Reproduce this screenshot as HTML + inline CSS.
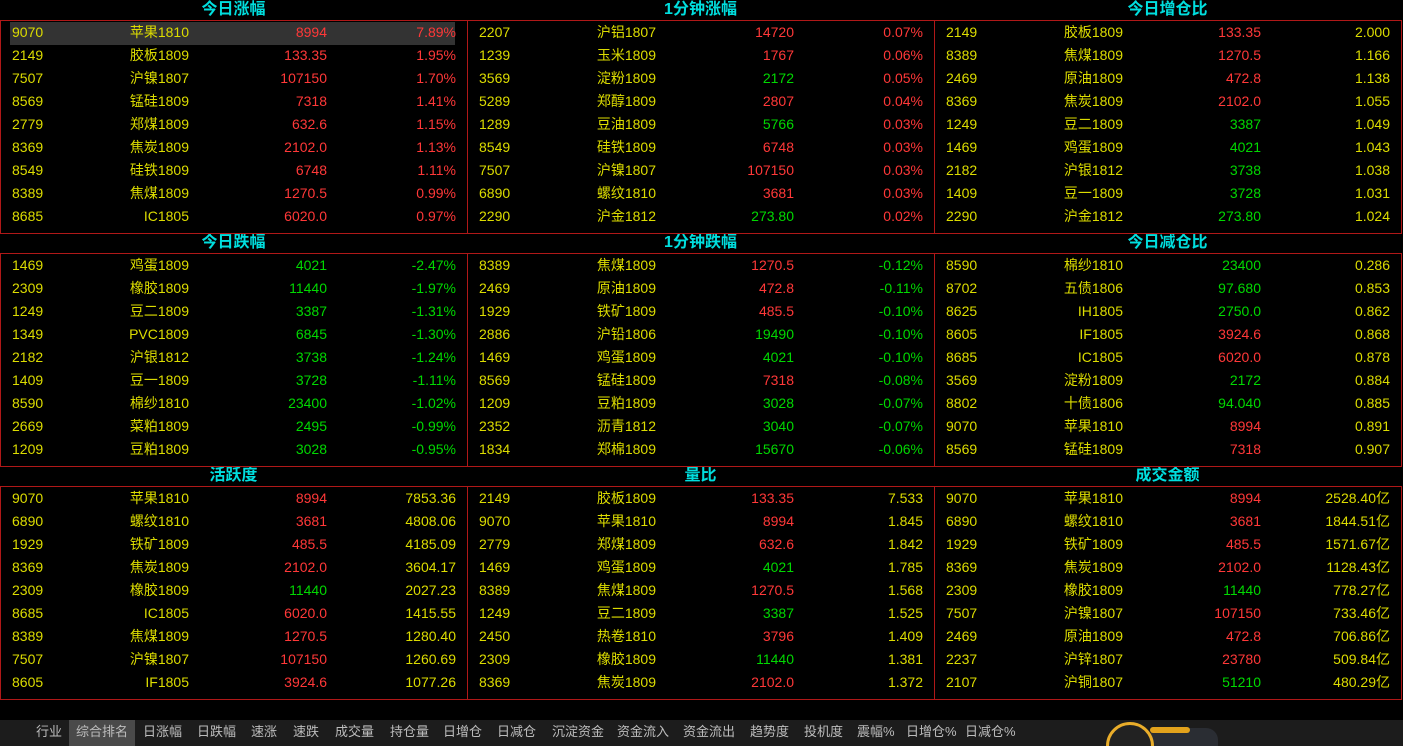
<!DOCTYPE html>
<html><head><meta charset="utf-8"><style>
html,body{margin:0;padding:0;background:#000;width:1403px;height:746px;overflow:hidden;position:relative;font-family:"Liberation Sans","Noto Sans CJK SC",sans-serif;}
.t{position:absolute;height:20px;line-height:20px;width:467px;text-align:center;color:#00dede;font-size:16px;font-weight:bold;}
.box{position:absolute;left:0;width:1400px;height:212px;border:1px solid #b01818;}
.v{position:absolute;top:0;bottom:0;width:1px;background:#b01818;}
.p{position:absolute;width:467px;}
.r{position:relative;height:23px;line-height:23px;font-size:14px;}
.r span{position:absolute;white-space:nowrap;}
.c{left:12px;color:#dcdc00;}
.n{right:278px;color:#dcdc00;}
.x{right:140px;}
.q{right:11px;}
.R{color:#ff3838}.G{color:#00d800}.Y{color:#dcdc00}
.hl{background:#333;}
.tb{position:absolute;left:0;top:720px;width:1403px;height:26px;background:#1c1c1c;}
.tb span{position:absolute;top:0;height:26px;line-height:24px;font-size:13px;color:#bdbdbd;}
</style></head><body>
<div class="t" style="left:0;top:0">今日涨幅</div>
<div class="t" style="left:467px;top:0">1分钟涨幅</div>
<div class="t" style="left:934px;top:0">今日增仓比</div>
<div class="t" style="left:0;top:233px">今日跌幅</div>
<div class="t" style="left:467px;top:233px">1分钟跌幅</div>
<div class="t" style="left:934px;top:233px">今日减仓比</div>
<div class="t" style="left:0;top:466px">活跃度</div>
<div class="t" style="left:467px;top:466px">量比</div>
<div class="t" style="left:934px;top:466px">成交金额</div>

<div class="box" style="top:20px"><div class="v" style="left:466px"></div><div class="v" style="left:933px"></div></div>
<div class="box" style="top:253px"><div class="v" style="left:466px"></div><div class="v" style="left:933px"></div></div>
<div class="box" style="top:486px"><div class="v" style="left:466px"></div><div class="v" style="left:933px"></div></div>

<div class="p" style="left:0;top:21px">
<div class="r"><div class="hl" style="position:absolute;left:10px;right:12px;top:1px;height:23px"></div><span class="c">9070</span><span class="n">苹果1810</span><span class="x R">8994</span><span class="q R">7.89%</span></div>
<div class="r"><span class="c">2149</span><span class="n">胶板1809</span><span class="x R">133.35</span><span class="q R">1.95%</span></div>
<div class="r"><span class="c">7507</span><span class="n">沪镍1807</span><span class="x R">107150</span><span class="q R">1.70%</span></div>
<div class="r"><span class="c">8569</span><span class="n">锰硅1809</span><span class="x R">7318</span><span class="q R">1.41%</span></div>
<div class="r"><span class="c">2779</span><span class="n">郑煤1809</span><span class="x R">632.6</span><span class="q R">1.15%</span></div>
<div class="r"><span class="c">8369</span><span class="n">焦炭1809</span><span class="x R">2102.0</span><span class="q R">1.13%</span></div>
<div class="r"><span class="c">8549</span><span class="n">硅铁1809</span><span class="x R">6748</span><span class="q R">1.11%</span></div>
<div class="r"><span class="c">8389</span><span class="n">焦煤1809</span><span class="x R">1270.5</span><span class="q R">0.99%</span></div>
<div class="r"><span class="c">8685</span><span class="n">IC1805</span><span class="x R">6020.0</span><span class="q R">0.97%</span></div>
</div>
<div class="p" style="left:467px;top:21px">
<div class="r"><span class="c">2207</span><span class="n">沪铝1807</span><span class="x R">14720</span><span class="q R">0.07%</span></div>
<div class="r"><span class="c">1239</span><span class="n">玉米1809</span><span class="x R">1767</span><span class="q R">0.06%</span></div>
<div class="r"><span class="c">3569</span><span class="n">淀粉1809</span><span class="x G">2172</span><span class="q R">0.05%</span></div>
<div class="r"><span class="c">5289</span><span class="n">郑醇1809</span><span class="x R">2807</span><span class="q R">0.04%</span></div>
<div class="r"><span class="c">1289</span><span class="n">豆油1809</span><span class="x G">5766</span><span class="q R">0.03%</span></div>
<div class="r"><span class="c">8549</span><span class="n">硅铁1809</span><span class="x R">6748</span><span class="q R">0.03%</span></div>
<div class="r"><span class="c">7507</span><span class="n">沪镍1807</span><span class="x R">107150</span><span class="q R">0.03%</span></div>
<div class="r"><span class="c">6890</span><span class="n">螺纹1810</span><span class="x R">3681</span><span class="q R">0.03%</span></div>
<div class="r"><span class="c">2290</span><span class="n">沪金1812</span><span class="x G">273.80</span><span class="q R">0.02%</span></div>
</div>
<div class="p" style="left:934px;top:21px">
<div class="r"><span class="c">2149</span><span class="n">胶板1809</span><span class="x R">133.35</span><span class="q Y">2.000</span></div>
<div class="r"><span class="c">8389</span><span class="n">焦煤1809</span><span class="x R">1270.5</span><span class="q Y">1.166</span></div>
<div class="r"><span class="c">2469</span><span class="n">原油1809</span><span class="x R">472.8</span><span class="q Y">1.138</span></div>
<div class="r"><span class="c">8369</span><span class="n">焦炭1809</span><span class="x R">2102.0</span><span class="q Y">1.055</span></div>
<div class="r"><span class="c">1249</span><span class="n">豆二1809</span><span class="x G">3387</span><span class="q Y">1.049</span></div>
<div class="r"><span class="c">1469</span><span class="n">鸡蛋1809</span><span class="x G">4021</span><span class="q Y">1.043</span></div>
<div class="r"><span class="c">2182</span><span class="n">沪银1812</span><span class="x G">3738</span><span class="q Y">1.038</span></div>
<div class="r"><span class="c">1409</span><span class="n">豆一1809</span><span class="x G">3728</span><span class="q Y">1.031</span></div>
<div class="r"><span class="c">2290</span><span class="n">沪金1812</span><span class="x G">273.80</span><span class="q Y">1.024</span></div>
</div>

<div class="p" style="left:0;top:254px">
<div class="r"><span class="c">1469</span><span class="n">鸡蛋1809</span><span class="x G">4021</span><span class="q G">-2.47%</span></div>
<div class="r"><span class="c">2309</span><span class="n">橡胶1809</span><span class="x G">11440</span><span class="q G">-1.97%</span></div>
<div class="r"><span class="c">1249</span><span class="n">豆二1809</span><span class="x G">3387</span><span class="q G">-1.31%</span></div>
<div class="r"><span class="c">1349</span><span class="n">PVC1809</span><span class="x G">6845</span><span class="q G">-1.30%</span></div>
<div class="r"><span class="c">2182</span><span class="n">沪银1812</span><span class="x G">3738</span><span class="q G">-1.24%</span></div>
<div class="r"><span class="c">1409</span><span class="n">豆一1809</span><span class="x G">3728</span><span class="q G">-1.11%</span></div>
<div class="r"><span class="c">8590</span><span class="n">棉纱1810</span><span class="x G">23400</span><span class="q G">-1.02%</span></div>
<div class="r"><span class="c">2669</span><span class="n">菜粕1809</span><span class="x G">2495</span><span class="q G">-0.99%</span></div>
<div class="r"><span class="c">1209</span><span class="n">豆粕1809</span><span class="x G">3028</span><span class="q G">-0.95%</span></div>
</div>
<div class="p" style="left:467px;top:254px">
<div class="r"><span class="c">8389</span><span class="n">焦煤1809</span><span class="x R">1270.5</span><span class="q G">-0.12%</span></div>
<div class="r"><span class="c">2469</span><span class="n">原油1809</span><span class="x R">472.8</span><span class="q G">-0.11%</span></div>
<div class="r"><span class="c">1929</span><span class="n">铁矿1809</span><span class="x R">485.5</span><span class="q G">-0.10%</span></div>
<div class="r"><span class="c">2886</span><span class="n">沪铅1806</span><span class="x G">19490</span><span class="q G">-0.10%</span></div>
<div class="r"><span class="c">1469</span><span class="n">鸡蛋1809</span><span class="x G">4021</span><span class="q G">-0.10%</span></div>
<div class="r"><span class="c">8569</span><span class="n">锰硅1809</span><span class="x R">7318</span><span class="q G">-0.08%</span></div>
<div class="r"><span class="c">1209</span><span class="n">豆粕1809</span><span class="x G">3028</span><span class="q G">-0.07%</span></div>
<div class="r"><span class="c">2352</span><span class="n">沥青1812</span><span class="x G">3040</span><span class="q G">-0.07%</span></div>
<div class="r"><span class="c">1834</span><span class="n">郑棉1809</span><span class="x G">15670</span><span class="q G">-0.06%</span></div>
</div>
<div class="p" style="left:934px;top:254px">
<div class="r"><span class="c">8590</span><span class="n">棉纱1810</span><span class="x G">23400</span><span class="q Y">0.286</span></div>
<div class="r"><span class="c">8702</span><span class="n">五债1806</span><span class="x G">97.680</span><span class="q Y">0.853</span></div>
<div class="r"><span class="c">8625</span><span class="n">IH1805</span><span class="x G">2750.0</span><span class="q Y">0.862</span></div>
<div class="r"><span class="c">8605</span><span class="n">IF1805</span><span class="x R">3924.6</span><span class="q Y">0.868</span></div>
<div class="r"><span class="c">8685</span><span class="n">IC1805</span><span class="x R">6020.0</span><span class="q Y">0.878</span></div>
<div class="r"><span class="c">3569</span><span class="n">淀粉1809</span><span class="x G">2172</span><span class="q Y">0.884</span></div>
<div class="r"><span class="c">8802</span><span class="n">十债1806</span><span class="x G">94.040</span><span class="q Y">0.885</span></div>
<div class="r"><span class="c">9070</span><span class="n">苹果1810</span><span class="x R">8994</span><span class="q Y">0.891</span></div>
<div class="r"><span class="c">8569</span><span class="n">锰硅1809</span><span class="x R">7318</span><span class="q Y">0.907</span></div>
</div>

<div class="p" style="left:0;top:487px">
<div class="r"><span class="c">9070</span><span class="n">苹果1810</span><span class="x R">8994</span><span class="q Y">7853.36</span></div>
<div class="r"><span class="c">6890</span><span class="n">螺纹1810</span><span class="x R">3681</span><span class="q Y">4808.06</span></div>
<div class="r"><span class="c">1929</span><span class="n">铁矿1809</span><span class="x R">485.5</span><span class="q Y">4185.09</span></div>
<div class="r"><span class="c">8369</span><span class="n">焦炭1809</span><span class="x R">2102.0</span><span class="q Y">3604.17</span></div>
<div class="r"><span class="c">2309</span><span class="n">橡胶1809</span><span class="x G">11440</span><span class="q Y">2027.23</span></div>
<div class="r"><span class="c">8685</span><span class="n">IC1805</span><span class="x R">6020.0</span><span class="q Y">1415.55</span></div>
<div class="r"><span class="c">8389</span><span class="n">焦煤1809</span><span class="x R">1270.5</span><span class="q Y">1280.40</span></div>
<div class="r"><span class="c">7507</span><span class="n">沪镍1807</span><span class="x R">107150</span><span class="q Y">1260.69</span></div>
<div class="r"><span class="c">8605</span><span class="n">IF1805</span><span class="x R">3924.6</span><span class="q Y">1077.26</span></div>
</div>
<div class="p" style="left:467px;top:487px">
<div class="r"><span class="c">2149</span><span class="n">胶板1809</span><span class="x R">133.35</span><span class="q Y">7.533</span></div>
<div class="r"><span class="c">9070</span><span class="n">苹果1810</span><span class="x R">8994</span><span class="q Y">1.845</span></div>
<div class="r"><span class="c">2779</span><span class="n">郑煤1809</span><span class="x R">632.6</span><span class="q Y">1.842</span></div>
<div class="r"><span class="c">1469</span><span class="n">鸡蛋1809</span><span class="x G">4021</span><span class="q Y">1.785</span></div>
<div class="r"><span class="c">8389</span><span class="n">焦煤1809</span><span class="x R">1270.5</span><span class="q Y">1.568</span></div>
<div class="r"><span class="c">1249</span><span class="n">豆二1809</span><span class="x G">3387</span><span class="q Y">1.525</span></div>
<div class="r"><span class="c">2450</span><span class="n">热卷1810</span><span class="x R">3796</span><span class="q Y">1.409</span></div>
<div class="r"><span class="c">2309</span><span class="n">橡胶1809</span><span class="x G">11440</span><span class="q Y">1.381</span></div>
<div class="r"><span class="c">8369</span><span class="n">焦炭1809</span><span class="x R">2102.0</span><span class="q Y">1.372</span></div>
</div>
<div class="p" style="left:934px;top:487px">
<div class="r"><span class="c">9070</span><span class="n">苹果1810</span><span class="x R">8994</span><span class="q Y">2528.40亿</span></div>
<div class="r"><span class="c">6890</span><span class="n">螺纹1810</span><span class="x R">3681</span><span class="q Y">1844.51亿</span></div>
<div class="r"><span class="c">1929</span><span class="n">铁矿1809</span><span class="x R">485.5</span><span class="q Y">1571.67亿</span></div>
<div class="r"><span class="c">8369</span><span class="n">焦炭1809</span><span class="x R">2102.0</span><span class="q Y">1128.43亿</span></div>
<div class="r"><span class="c">2309</span><span class="n">橡胶1809</span><span class="x G">11440</span><span class="q Y">778.27亿</span></div>
<div class="r"><span class="c">7507</span><span class="n">沪镍1807</span><span class="x R">107150</span><span class="q Y">733.46亿</span></div>
<div class="r"><span class="c">2469</span><span class="n">原油1809</span><span class="x R">472.8</span><span class="q Y">706.86亿</span></div>
<div class="r"><span class="c">2237</span><span class="n">沪锌1807</span><span class="x R">23780</span><span class="q Y">509.84亿</span></div>
<div class="r"><span class="c">2107</span><span class="n">沪铜1807</span><span class="x G">51210</span><span class="q Y">480.29亿</span></div>
</div>

<div class="tb">
<span style="left:36px">行业</span>
<span style="left:69px;width:66px;background:#4a4a4a;text-align:center">综合排名</span>
<span style="left:143px">日涨幅</span>
<span style="left:197px">日跌幅</span>
<span style="left:251px">速涨</span>
<span style="left:293px">速跌</span>
<span style="left:335px">成交量</span>
<span style="left:390px">持仓量</span>
<span style="left:443px">日增仓</span>
<span style="left:497px">日减仓</span>
<span style="left:552px">沉淀资金</span>
<span style="left:617px">资金流入</span>
<span style="left:683px">资金流出</span>
<span style="left:750px">趋势度</span>
<span style="left:804px">投机度</span>
<span style="left:857px">震幅%</span>
<span style="left:906px">日增仓%</span>
<span style="left:965px">日减仓%</span>
</div>
<div style="position:absolute;left:1148px;top:728px;width:70px;height:30px;border-radius:12px;background:#2a2d33"></div>
<div style="position:absolute;left:1150px;top:727px;width:40px;height:6px;border-radius:3px;background:#e2a21c"></div>
<div style="position:absolute;left:1106px;top:722px;width:48px;height:48px;border-radius:50%;border:3px solid #e9ad2a;background:#222;box-sizing:border-box"></div>
</body></html>
